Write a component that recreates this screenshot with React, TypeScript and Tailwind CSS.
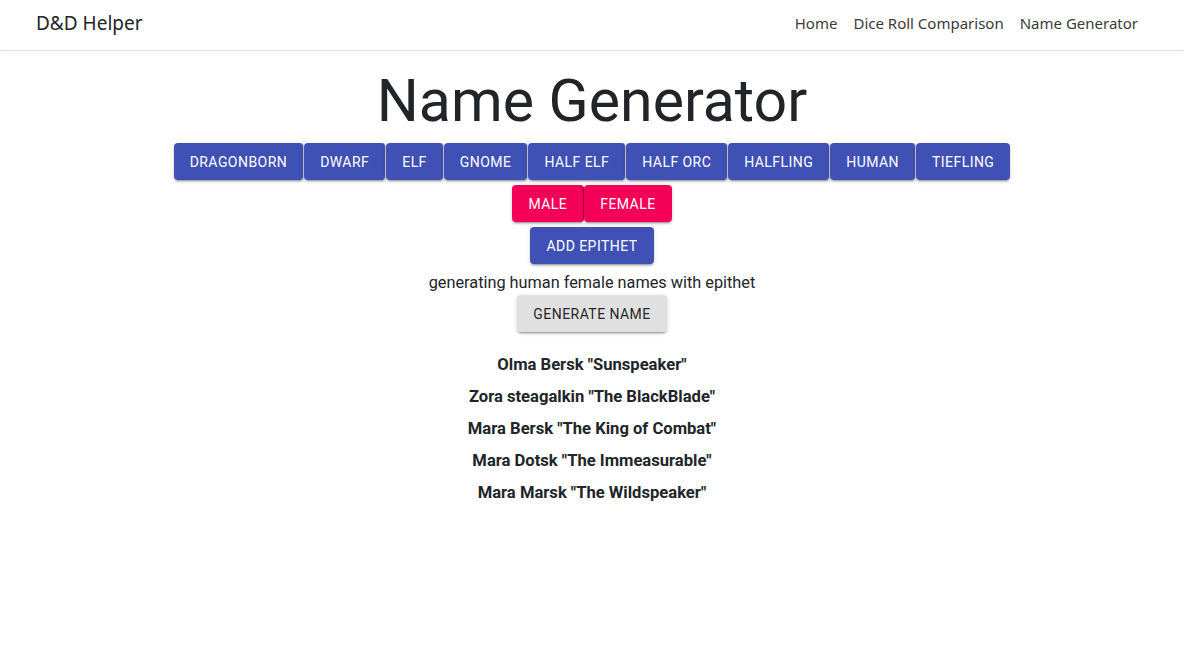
import React from "react";

const races = ["Dragonborn", "Dwarf", "Elf", "Gnome", "Half Elf", "Half Orc", "Halfling", "Human", "Tiefling"];
const names = [
  'Olma Bersk "Sunspeaker"',
  'Zora steagalkin "The BlackBlade"',
  'Mara Bersk "The King of Combat"',
  'Mara Dotsk "The Immeasurable"',
  'Mara Marsk "The Wildspeaker"',
];

const btnBase =
  "h-[37px] px-4 rounded-[4px] text-[14px] font-normal uppercase tracking-[0.45px] leading-none shadow-[0_3px_1px_-2px_rgba(0,0,0,0.2),0_2px_2px_0_rgba(0,0,0,0.14),0_1px_5px_0_rgba(0,0,0,0.12)]";

export default function App() {
  return (
    <div className="min-h-[650px] bg-white text-[#212529]">
      <nav
        className="h-[51px] flex items-center justify-between pl-[36px] pr-[38px] pb-[3px] border-b border-[#dee2e6] shadow-[0_2px_4px_rgba(0,0,0,0.04)]"
        style={{ fontFamily: '"Noto Sans", "Open Sans", sans-serif' }}
      >
        <span className="text-[19px] text-[#212529]">D&amp;D Helper</span>
        <div className="flex items-center text-[15px] text-[#3a3a3a]">
          <span className="px-2">Home</span>
          <span className="px-2">Dice Roll Comparison</span>
          <span className="px-2">Name Generator</span>
        </div>
      </nav>
      <main className="flex flex-col items-center" style={{ fontFamily: 'Roboto, "Noto Sans", sans-serif' }}>
        <h1 className="text-[59px] leading-none font-normal mt-[20px] mb-[13px] text-[#212529]">Name Generator</h1>
        <div className="flex">
          {races.map((r) => (
            <button key={r} className={`${btnBase} bg-[#3f51b5] text-white border-r border-[#ccc] last:border-r-0`}>
              {r}
            </button>
          ))}
        </div>
        <div className="flex mt-[5px]">
          {["Male", "Female"].map((r) => (
            <button key={r} className={`${btnBase} bg-[#f50057] text-white border-r border-[#b3003f] last:border-r-0`}>
              {r}
            </button>
          ))}
        </div>
        <button className={`${btnBase} bg-[#3f51b5] text-white mt-[5px]`}>Add Epithet</button>
        <p className="text-[16.3px] mt-[9px] leading-[20px]">generating human female names with epithet</p>
        <button className={`${btnBase} bg-[#e0e0e0] text-[rgba(0,0,0,0.87)] mt-[2px] h-[36px]`}>Generate Name</button>
        <div className="mt-[23px] flex flex-col items-center">
          {names.map((n) => (
            <div key={n} className="text-[16.6px] font-bold leading-[20px] mb-[12px] text-[#212529]">
              {n}
            </div>
          ))}
        </div>
      </main>
    </div>
  );
}
